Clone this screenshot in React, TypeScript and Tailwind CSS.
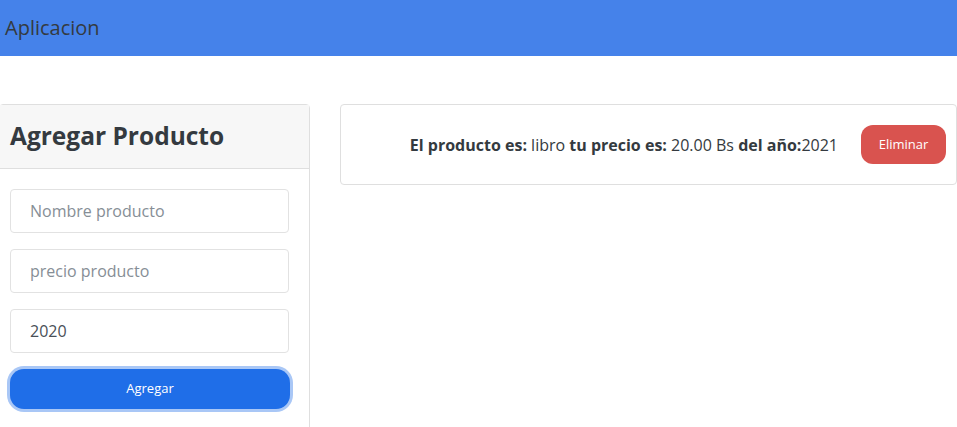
import React, { useState } from "react";

const App = () => {
  const [nombre, setNombre] = useState("");
  const [precio, setPrecio] = useState("");
  const [anio, setAnio] = useState("2020");

  return (
    <div className="min-h-screen bg-white text-[#212529]" style={{ fontFamily: '"Open Sans", "Noto Sans", sans-serif' }}>
      <nav className="h-[56px] bg-[#4582ea] flex items-center px-[5px]">
        <span className="text-[20px] text-[#343a40]">Aplicacion</span>
      </nav>

      <div className="flex gap-[30px] mt-[48px] ml-[-1px]">
        {/* form card */}
        <div className="w-[311px] h-[330px] border border-[#dfdfdf] rounded-t-[4px] shrink-0">
          <div className="h-[64px] bg-[#f7f7f7] border-b border-[#dfdfdf] flex items-center px-[10px]">
            <h3 className="text-[24.5px] font-bold text-[#343a40]">Agregar Producto</h3>
          </div>
          <form className="flex flex-col gap-[16px] pt-[20px] px-[10px]" onSubmit={(e) => e.preventDefault()}>
            <input
              type="text"
              placeholder="Nombre producto"
              className="h-[44px] w-[279px] border border-[#e2e2e2] rounded-[4px] px-[19px] text-[16px] text-[#495057] placeholder:text-[#868e96] outline-none"
              value={nombre}
              onChange={(e) => setNombre(e.target.value)}
            />
            <input
              type="text"
              placeholder="precio producto"
              className="h-[44px] w-[279px] border border-[#e2e2e2] rounded-[4px] px-[19px] text-[16px] text-[#495057] placeholder:text-[#868e96] outline-none"
              value={precio}
              onChange={(e) => setPrecio(e.target.value)}
            />
            <input
              type="text"
              className="h-[44px] w-[279px] border border-[#e2e2e2] rounded-[4px] px-[19px] text-[16px] text-[#495057] outline-none"
              value={anio}
              onChange={(e) => setAnio(e.target.value)}
            />
            <button
              type="submit"
              className="h-[40px] w-[280px] bg-[#1f6ee8] text-white text-[13px] rounded-[14px] ring-[3px] ring-[#a9c7f6]"
            >
              Agregar
            </button>
          </form>
        </div>

        {/* product list */}
        <div className="w-[617px] h-[81px] border border-[#dfdfdf] rounded-[4px] flex items-center justify-end pr-[10px] shrink-0">
          <p className="text-[16px] text-[#343a40]">
            <b>El producto es:</b> libro <b>tu precio es:</b> 20.00 Bs <b>del año:</b>2021
          </p>
          <button className="ml-[23px] h-[39px] w-[85px] bg-[#d9534f] text-white text-[13px] rounded-[12px]">
            Eliminar
          </button>
        </div>
      </div>
    </div>
  );
};

export default App;
